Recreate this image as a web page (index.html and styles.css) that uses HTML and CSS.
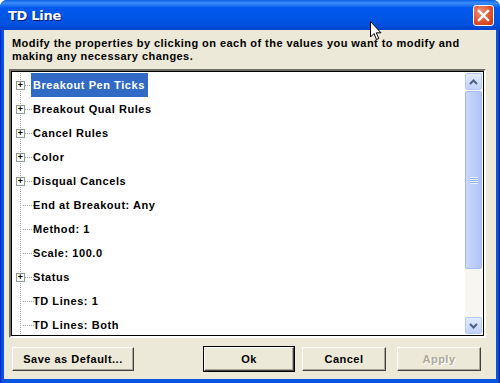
FILE: index.html
```html
<!DOCTYPE html>
<html lang="en">
<head>
  <meta charset="UTF-8">
  <title>TD Line</title>
  <link rel="stylesheet" href="styles.css">
</head>
<body>

<div class="window">
  <div class="titlebar">
    <span class="title">TD Line</span>
    <button class="close-btn" aria-label="Close">
      <svg width="13" height="13" viewBox="0 0 13 13">
        <path d="M2 2 L11 11 M11 2 L2 11" stroke="#fff" stroke-width="2.4" stroke-linecap="square"/>
      </svg>
    </button>
  </div>

  <div class="dialog-body">
    <p class="intro">Modify the properties by clicking on each of the values you want to modify and<br>making any necessary changes.</p>

    <div class="tree-box">
      <ul class="tree">
        <li class="node has-children"><span class="toggle">+</span><span class="label selected">Breakout Pen Ticks</span></li>
        <li class="node has-children"><span class="toggle">+</span><span class="label">Breakout Qual Rules</span></li>
        <li class="node has-children"><span class="toggle">+</span><span class="label">Cancel Rules</span></li>
        <li class="node has-children"><span class="toggle">+</span><span class="label">Color</span></li>
        <li class="node has-children"><span class="toggle">+</span><span class="label">Disqual Cancels</span></li>
        <li class="node leaf"><span class="label">End at Breakout: Any</span></li>
        <li class="node leaf"><span class="label">Method: 1</span></li>
        <li class="node leaf"><span class="label">Scale: 100.0</span></li>
        <li class="node has-children"><span class="toggle">+</span><span class="label">Status</span></li>
        <li class="node leaf"><span class="label">TD Lines: 1</span></li>
        <li class="node leaf last"><span class="label">TD Lines: Both</span></li>
      </ul>

      <!-- Luna style scrollbar -->
      <div class="scrollbar">
        <div class="sb-btn">
          <svg width="9" height="6" viewBox="0 0 9 6"><path d="M1 5 L4.5 1.5 L8 5" fill="none" stroke="#4D6185" stroke-width="2"/></svg>
        </div>
        <div class="sb-track">
          <div class="sb-thumb"><span class="grip"></span></div>
        </div>
        <div class="sb-btn">
          <svg width="9" height="6" viewBox="0 0 9 6"><path d="M1 1 L4.5 4.5 L8 1" fill="none" stroke="#4D6185" stroke-width="2"/></svg>
        </div>
      </div>
    </div>

    <div class="button-row">
      <button class="btn btn-wide">Save as Default...</button>
      <div class="spacer"></div>
      <button class="btn default">Ok</button>
      <button class="btn">Cancel</button>
      <button class="btn" disabled>Apply</button>
    </div>
  </div>

  <svg class="cursor" width="12" height="20" viewBox="0 0 12 20">
    <path d="M0.5 0.5 L0.5 16 L4 12.5 L6.5 18.5 L8.8 17.5 L6.3 11.8 L11 11.8 Z" fill="#fff" stroke="#000" stroke-width="1"/>
  </svg>
</div>

</body>
</html>
```

FILE: styles.css
```css
:root {
  --face: #ECE9D8;
  --frame: #0831D9;
  --text: #000;
  --font: 'Liberation Sans', Arial, sans-serif;
}

* {
  box-sizing: border-box;
}

body {
  margin: 0;
  padding: 0;
  background: #fff;
  font-family: var(--font);
}

.window {
  position: relative;
  width: 500px;
  height: 383px;
  display: flex;
  flex-direction: column;
  background: linear-gradient(to right, #0019CF 0, #0855DD 2px, #0855DD 498px, #001090 100%);
  padding: 0 4px 4px 4px;
  border-radius: 7px 7px 0 0;
  overflow: hidden;
}

.titlebar {
  height: 30px;
  margin: 0 -4px;
  padding: 0 6px 0 8px;
  display: flex;
  align-items: center;
  justify-content: space-between;
  background: linear-gradient(to bottom, #0A5FE8 0, #3C8CF8 3px, #0058EE 8px, #0055E5 18px, #0050DE 25px, #0042CC 30px);
}

.title {
  color: #fff;
  font-family: 'DejaVu Sans', sans-serif;
  font-weight: bold;
  font-size: 13px;
  letter-spacing: -0.3px;
  text-shadow: 1px 1px 0 #0A1C6F;
}

.close-btn {
  width: 21px;
  height: 21px;
  padding: 0;
  border: 1px solid #fff;
  border-radius: 3px;
  background: radial-gradient(circle at 35% 30%, #F1917A 0, #E0512C 55%, #C5391A 100%);
  display: flex;
  align-items: center;
  justify-content: center;
}

.dialog-body {
  flex: 1;
  background: var(--face);
  display: flex;
  flex-direction: column;
  padding: 0 10px 0 5px;
}

.intro {
  margin: 7px 0 0 3px;
  font-size: 11px;
  font-weight: bold;
  line-height: 13px;
  letter-spacing: 0.45px;
  white-space: nowrap;
  color: var(--text);
}

.tree-box {
  margin-top: 6px;
  height: 269px;
  background: #fff;
  border: 2px solid;
  border-color: #716F64 #fff #fff #716F64;
  box-shadow: inset 1px 1px 0 #000, inset -1px -1px 0 #000;
  display: flex;
  padding: 2px;
}

.tree {
  flex: 1;
  list-style: none;
  margin: 0;
  padding: 0 0 0 3px;
  position: relative;
}

.tree::before {
  content: '';
  position: absolute;
  left: 7px;
  top: 0;
  bottom: 0;
  border-left: 1px dotted #A0A0A0;
}

.node {
  height: 24px;
  display: flex;
  align-items: center;
  position: relative;
  font-size: 11px;
  font-weight: bold;
  letter-spacing: 0.55px;
}

.node::before {
  content: '';
  position: absolute;
  left: 7px;
  width: 11px;
  top: 12px;
  border-top: 1px dotted #A0A0A0;
}

.toggle {
  position: relative;
  z-index: 1;
  width: 9px;
  height: 9px;
  border: 1px solid #919B9C;
  background: #fff;
  font-size: 9px;
  line-height: 7px;
  text-align: center;
  font-weight: bold;
  letter-spacing: 0;
  color: #000;
}

.leaf .label {
  margin-left: 15px;
}

.label {
  margin-left: 6px;
  padding: 0 3px 0 2px;
  height: 24px;
  line-height: 24px;
  position: relative;
  z-index: 1;
}

.label.selected {
  background: #316AC5;
  color: #fff;
}

.scrollbar {
  width: 17px;
  display: flex;
  flex-direction: column;
  background: #F7F6F1;
}

.sb-btn {
  height: 17px;
  border: 1px solid #B6CAF7;
  border-radius: 2px;
  background: linear-gradient(to bottom, #E1EAFE, #C1D3FB);
  display: flex;
  align-items: center;
  justify-content: center;
}

.sb-track {
  flex: 1;
  padding: 1px 0 48px 0;
  display: flex;
}

.sb-thumb {
  flex: 1;
  border: 1px solid #A4BCF5;
  border-radius: 2px;
  background: linear-gradient(to right, #C9D8FC, #BACCF8 60%, #AFC3F6);
  display: flex;
  align-items: center;
  justify-content: center;
}

.grip {
  width: 8px;
  height: 7px;
  background: repeating-linear-gradient(to bottom, #EEF4FE 0, #EEF4FE 1px, #8CB0F8 1px, #8CB0F8 2px);
}

.button-row {
  display: flex;
  gap: 8px;
  margin-top: 9px;
  padding: 0 5px 0 3px;
}

.spacer {
  flex: 1;
}

.btn {
  height: 24px;
  width: 84px;
  font-family: var(--font);
  font-size: 11px;
  font-weight: bold;
  letter-spacing: 0.5px;
  color: #000;
  background: var(--face);
  border: 1px solid;
  border-color: #fff #404040 #404040 #fff;
  box-shadow: inset -1px -1px 0 #ACA899;
  padding: 0;
}

.btn-wide {
  width: 122px;
}

.btn.default {
  width: 90px;
  outline: 1px solid #000;
}

.btn[disabled] {
  color: #ACA899;
  text-shadow: 1px 1px 0 #fff;
  margin-left: 3px;
}

.cursor {
  position: absolute;
  left: 370px;
  top: 21px;
}
```
